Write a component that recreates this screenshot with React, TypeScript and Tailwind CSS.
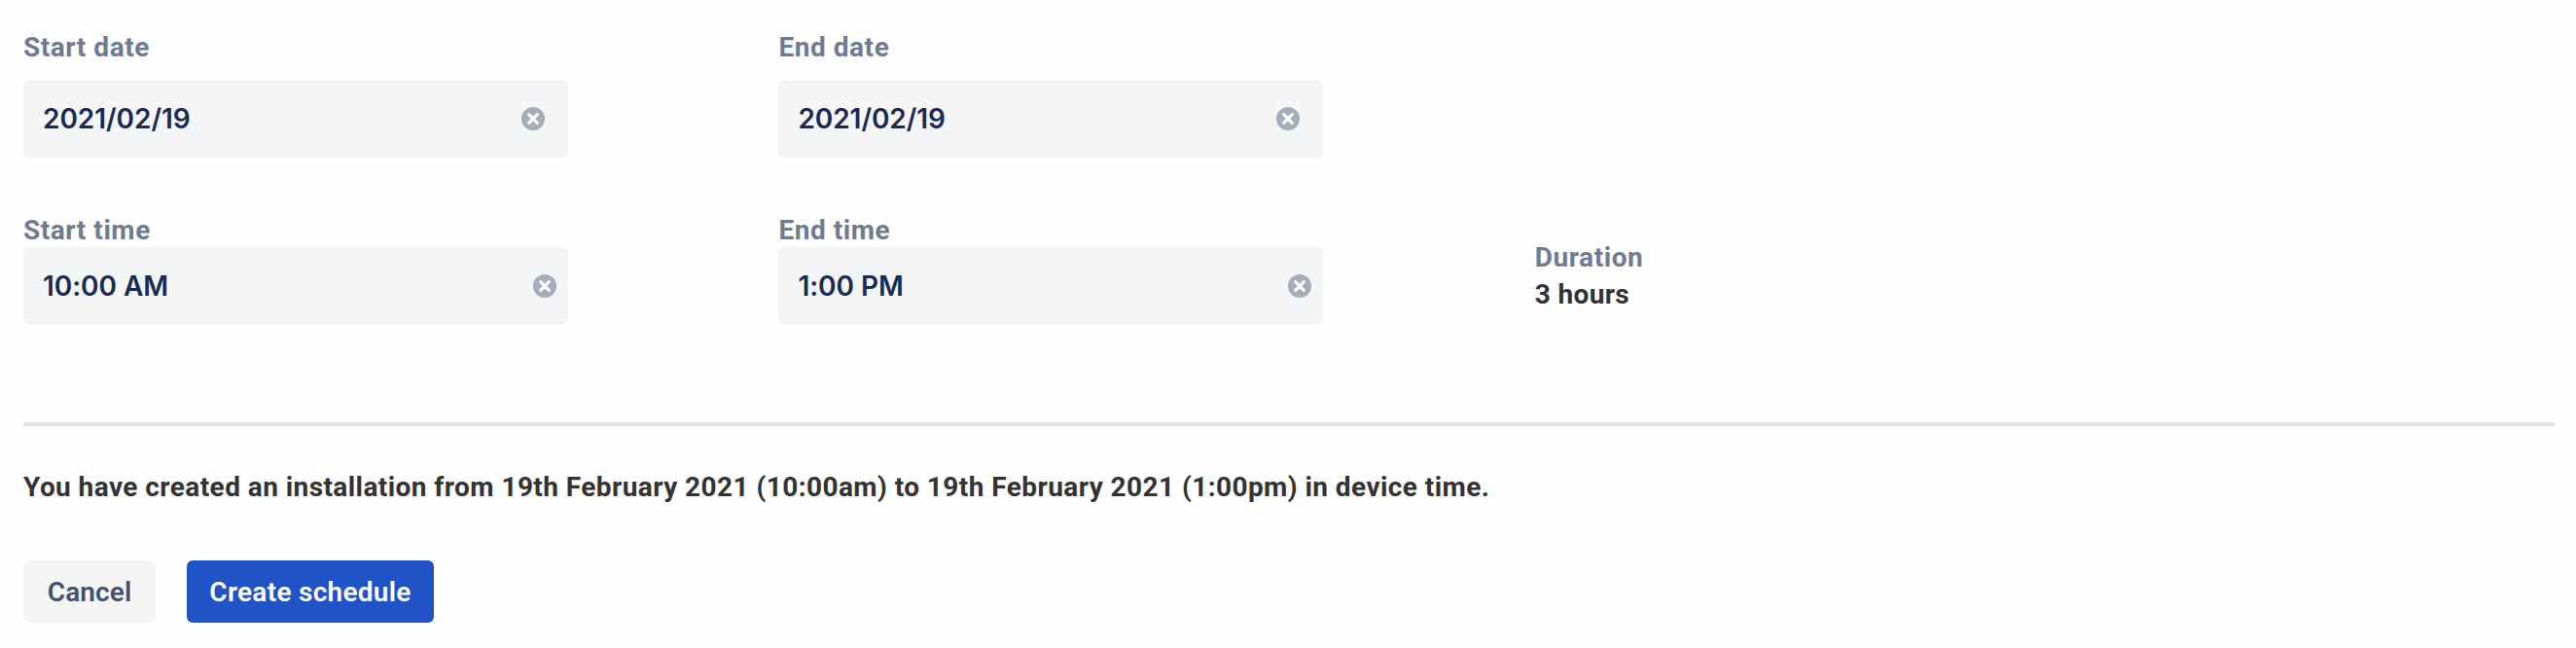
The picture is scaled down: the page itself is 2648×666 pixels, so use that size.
import React from "react";

function ClearIcon() {
  return (
    <svg className="size-6 shrink-0" viewBox="0 0 24 24" fill="none">
      <circle cx="12" cy="12" r="12" fill="#a5adba" />
      <path d="M7.7 7.7L16.3 16.3M16.3 7.7L7.7 16.3" stroke="#fff" strokeWidth="3.2" strokeLinecap="round" />
    </svg>
  );
}

const label = "font-['Roboto',sans-serif] text-[28px] leading-10 tracking-[0.55px] font-[680] text-[#6f7b91]";

function Field({ name, value, kind }: { name: string; value: string; kind: "date" | "time" }) {
  return (
    <div className="w-[776.4px]">
      <div className={label}>{name}</div>
      <div
        className={
          kind === "date"
            ? "mt-[13px] flex h-20 w-[560px] items-center justify-between rounded-[6px] bg-[#f4f5f7] pr-6 pl-5"
            : "-mt-[3px] flex h-20 w-[560px] items-center justify-between rounded-[6px] bg-[#f4f5f7] pr-3 pl-5"
        }
      >
        <span className="font-['Inter',sans-serif] text-[28px] leading-10 font-[580] tracking-[-0.05px] text-[#1a2a50]">{value}</span>
        <ClearIcon />
      </div>
    </div>
  );
}

export default function App() {
  return (
    <main className="h-[666px] w-full bg-[#fefefe] pt-[29px] pr-[22px] pl-6">
      <div className="flex">
        <Field name="Start date" value="2021/02/19" kind="date" />
        <Field name="End date" value="2021/02/19" kind="date" />
      </div>
      <div className="mt-[55px] flex">
        <Field name="Start time" value="10:00 AM" kind="time" />
        <Field name="End time" value="1:00 PM" kind="time" />
        <div className="pt-7 pl-px">
          <div className={label}>Duration</div>
          <div className="font-['Roboto',sans-serif] text-[28px] leading-9 font-[680] tracking-[0.35px] text-[#333]">3 hours</div>
        </div>
      </div>
      <hr className="mt-[100px] border-t-4 border-[#dfe3e6]" />
      <p className="mt-[43px] font-['Roboto',sans-serif] text-[28px] leading-10 font-[680] tracking-[0.43px] whitespace-nowrap text-[#333]">
        You have created an installation from 19th February 2021 (10:00am) to 19th February 2021 (1:00pm) in device time.
      </p>
      <div className="mt-[55px] flex gap-8">
        <button className="h-16 w-[136px] rounded-[6px] bg-[#f5f5f5] pt-px font-['Roboto',sans-serif] text-[28px] font-semibold tracking-[0.1px] text-[#42526e]">Cancel</button>
        <button className="h-16 w-[254px] rounded-[6px] bg-[#2053c5] pt-px font-['Roboto',sans-serif] text-[28px] font-semibold tracking-[0.28px] text-white">Create schedule</button>
      </div>
    </main>
  );
}
